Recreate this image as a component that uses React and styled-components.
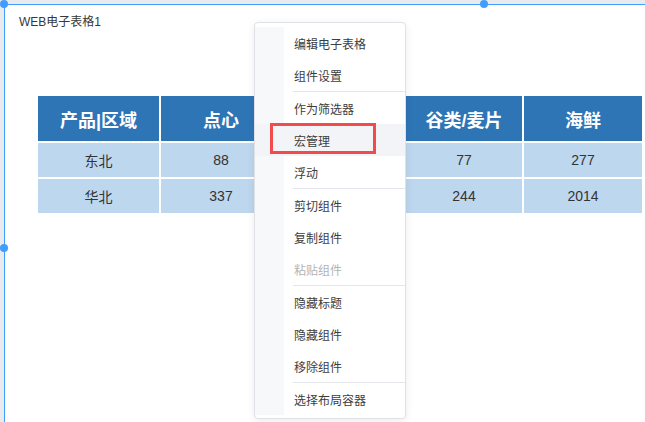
import React from "react";
import styled, { createGlobalStyle } from "styled-components";

const Global = createGlobalStyle`
  html, body { margin: 0; padding: 0; }
  body {
    background: #e9eaed;
    width: 645px;
    height: 422px;
    overflow: hidden;
    font-family: "Liberation Sans", "Noto Sans CJK SC", sans-serif;
  }
`;

const Widget = styled.div`
  position: relative;
  box-sizing: border-box;
  margin: 4px 0 0 4px;
  width: 961px;
  height: 490px;
  background: #fff;
  border: 1px solid #409eff;
  padding: 9px 0 0 14px;
  display: flex;
  flex-direction: column;
  gap: 66px;
`;

const Handle = styled.span`
  position: absolute;
  width: 8px;
  height: 8px;
  border-radius: 50%;
  background: #409eff;
  left: ${(p) => p.$left};
  top: ${(p) => p.$top};
`;

const Title = styled.div`
  font-size: 12px;
  line-height: 16px;
  color: #383838;
`;

const Grid = styled.div`
  display: grid;
  grid-template-columns: 121px 120px 121px 116px 118px;
  grid-template-rows: 45px 34px 34px;
  gap: 2px;
  margin-left: 19px;
  width: max-content;
`;

const HeadCell = styled.div`
  background: #2e75b6;
  color: #fff;
  font-weight: bold;
  font-size: 18px;
  display: flex;
  align-items: center;
  justify-content: center;
`;

const Cell = styled.div`
  background: #bdd7ee;
  color: #333;
  font-size: 14px;
  display: flex;
  align-items: center;
  justify-content: center;
`;

const Menu = styled.div`
  position: absolute;
  left: 249px;
  top: 17px;
  width: 152px;
  box-sizing: border-box;
  background: #fff;
  border: 1px solid #dfe1e6;
  border-radius: 4px;
  box-shadow: 0 2px 8px rgba(0, 0, 0, 0.08);
  padding: 4px 0 3px;
  font-family: "Noto Sans CJK SC", "Liberation Sans", sans-serif;
`;

const List = styled.div`
  background: linear-gradient(to right, #f7f8fa 29px, #fff 29px);
  display: flex;
  flex-direction: column;
`;

const Item = styled.div`
  position: relative;
  height: 32px;
  line-height: 33px;
  padding-left: 39px;
  font-size: 12px;
  color: ${(p) => (p.$disabled ? "#b4b4b4" : "#3d3d3d")};
  background: ${(p) => (p.$active ? "#f3f4f8" : "transparent")};
  white-space: nowrap;
`;

const Sep = styled.div`
  height: 1px;
  margin-left: 38px;
  background: #e4e6eb;
`;

const Mark = styled.span`
  position: absolute;
  left: 15px;
  top: -1px;
  width: 106px;
  height: 31px;
  box-sizing: border-box;
  border: 3px solid #f24b4b;
`;

const head = ["产品|区域", "点心", "", "谷类/麦片", "海鲜"];
const rows = [
  ["东北", "88", "", "77", "277"],
  ["华北", "337", "", "244", "2014"],
];

const menu = [
  { t: "编辑电子表格" },
  { t: "组件设置" },
  { sep: true },
  { t: "作为筛选器" },
  { t: "宏管理", active: true },
  { t: "浮动" },
  { sep: true },
  { t: "剪切组件" },
  { t: "复制组件" },
  { t: "粘贴组件", disabled: true },
  { sep: true },
  { t: "隐藏标题" },
  { t: "隐藏组件" },
  { t: "移除组件" },
  { sep: true },
  { t: "选择布局容器" },
];

export default function App() {
  return (
    <>
      <Global />
      <Widget>
        <Handle $left="-5px" $top="-5px" />
        <Handle $left="475px" $top="-5px" />
        <Handle $left="-5px" $top="calc(50% - 5px)" />
        <Title>WEB电子表格1</Title>
        <Grid>
          {head.map((h, i) => (
            <HeadCell key={"h" + i}>{h}</HeadCell>
          ))}
          {rows.map((r, ri) =>
            r.map((c, ci) => <Cell key={ri + "-" + ci}>{c}</Cell>)
          )}
        </Grid>
        <Menu>
          <List>
            {menu.map((m, i) =>
              m.sep ? (
                <Sep key={i} />
              ) : (
                <Item key={i} $active={m.active} $disabled={m.disabled}>
                  {m.t}
                  {m.active && <Mark />}
                </Item>
              )
            )}
          </List>
        </Menu>
      </Widget>
    </>
  );
}
